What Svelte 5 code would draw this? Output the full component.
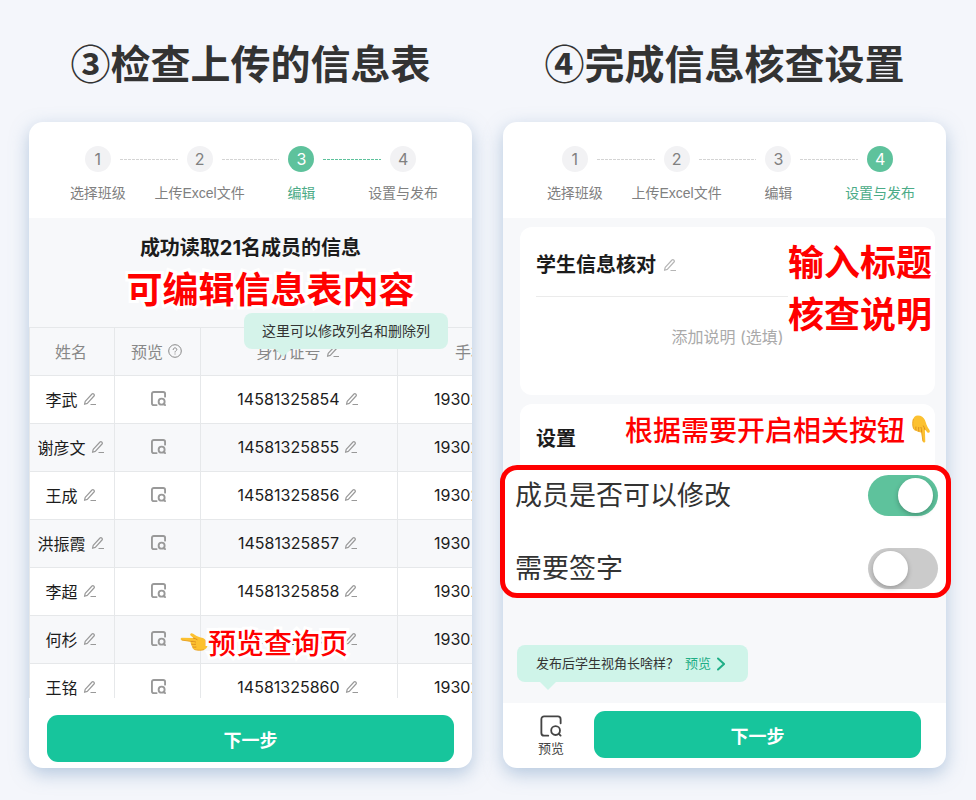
<script>
  const uploadSteps = ['选择班级', '上传Excel文件', '编辑', '设置与发布'];

  const members = [
    { name: '李武', id: '14581325854', phone: '19302' },
    { name: '谢彦文', id: '14581325855', phone: '19302' },
    { name: '王成', id: '14581325856', phone: '19302' },
    { name: '洪振霞', id: '14581325857', phone: '1930' },
    { name: '李超', id: '14581325858', phone: '19302' },
    { name: '何杉', id: '14581325859', phone: '19302' },
    { name: '王铭', id: '14581325860', phone: '19302' }
  ];

  let canEdit = true;
  let needSign = false;
</script>

{#snippet pencil()}
  <svg class="pencil" viewBox="0 0 14 14" fill="none" stroke="currentColor" stroke-width="1.2" aria-hidden="true">
    <path stroke-linejoin="round" d="M1.500 12.300l.7-3L9 2c.5-.5 1.200-.5 1.700 0l.3.3c.5.5.5 1.200 0 1.700L4.300 11.400zM7.500 12.500h5.500" />
  </svg>
{/snippet}

{#snippet previewIcon()}
  <svg class="preview-icon" viewBox="0 0 24 24" fill="none" stroke="currentColor" stroke-linecap="round" aria-hidden="true">
    <path d="M9 22.500H4.500a3 3 0 0 1-3-3v-15a3 3 0 0 1 3-3h15a3 3 0 0 1 3 3V9" />
    <circle cx="17" cy="17" r="4.800" />
    <path d="M20.500 20.500l2 2" />
  </svg>
{/snippet}

{#snippet hand()}
  <svg class="hand" viewBox="0 0 28 20" aria-hidden="true">
    <path fill="#fcc130" d="M1.600 5.700C.3 5.800.3 7.900 1.600 8.100l9.200 1.300c-.6 1-.3 2.100.7 2.700-.5 1.200 0 2.200 1 2.700-.3 1.400.5 2.400 1.800 2.800 2.500.8 6 1 8.700.5 2.700-.5 4.500-2.200 4.500-5 0-3.300-1.800-5.800-4.500-7C19.700 4.900 17 4.200 15 2.900 13.400 1.800 12.300 1 11.300 1.200c-1.300.3-1.500 1.700-.5 2.600l2.700 2.300z" />
    <path fill="none" stroke="#dd901f" stroke-linecap="round" d="M10.900 9.400c1.700-.2 3.300 0 4.700.6M11.500 12.200c1.400.3 2.800.3 4.100.1M12.600 15c1.200.3 2.300.3 3.400.1M13.500 6.100c1.300.2 2.500.8 3.600 1.500" />
    <path fill="none" stroke="#eaa526" stroke-linecap="round" d="M2 8.100l8.500 1.200M14.700 17.600c2.700.8 6.300.9 9 .1" />
  </svg>
{/snippet}

{#snippet stepper(current)}
  <ol class="steps">
    {#each uploadSteps as step, i}
      <li class:active={i + 1 === current}>
        <span class="num">{i + 1}</span>
        <span class="step-label">{step}</span>
      </li>
    {/each}
  </ol>
{/snippet}

<main class="page">
  <section class="column">
    <h1>③检查上传的信息表</h1>
    <div class="phone">
      {@render stepper(3)}
      <div class="content roster">
        <h2>成功读取21名成员的信息</h2>
        <p class="callout edit-callout">可编辑信息表内容</p>
        <div class="table-wrap">
          <table>
            <colgroup>
              <col class="col-name" />
              <col class="col-preview" />
              <col class="col-id" />
              <col />
            </colgroup>
            <thead>
              <tr>
                <th>姓名</th>
                <th>
                  <span class="cell">
                    预览
                    <svg class="help" viewBox="0 0 14 14" fill="none" stroke="currentColor" aria-hidden="true">
                      <circle cx="7" cy="7" r="6.300" />
                      <path stroke-linecap="round" d="M5.200 5.600c0-1 .8-1.700 1.800-1.700s1.800.7 1.800 1.600c0 1.200-1.800 1.300-1.800 2.600M7 9.900v.2" />
                    </svg>
                  </span>
                </th>
                <th><span class="cell">身份证号 {@render pencil()}</span></th>
                <th class="phone-head">手机</th>
              </tr>
            </thead>
            <tbody>
              {#each members as member}
                <tr>
                  <td><span class="cell">{member.name} {@render pencil()}</span></td>
                  <td><button type="button" class="icon-btn" aria-label="预览">{@render previewIcon()}</button></td>
                  <td><span class="cell">{member.id} {@render pencil()}</span></td>
                  <td class="phone-cell">{member.phone}</td>
                </tr>
              {/each}
            </tbody>
          </table>
          <div class="bubble column-tip">这里可以修改列名和删除列</div>
          <p class="callout preview-callout">{@render hand()}预览查询页</p>
        </div>
      </div>
      <footer>
        <button type="button" class="next">下一步</button>
      </footer>
    </div>
  </section>

  <section class="column">
    <h1>④完成信息核查设置</h1>
    <div class="phone settings-phone">
      {@render stepper(4)}
      <div class="content settings">
        <div class="panel form-panel">
          <h2>学生信息核对 {@render pencil()}</h2>
          <textarea aria-label="添加说明" placeholder="添加说明 (选填)"></textarea>
          <p class="callout title-callout">输入标题<br />核查说明</p>
        </div>
        <div class="panel switch-panel">
          <h2>设置</h2>
          <p class="callout switch-callout">根据需要开启相关按钮<span class="hand-down">{@render hand()}</span></p>
        </div>
        <div class="highlight">
          <label>
            成员是否可以修改
            <input type="checkbox" role="switch" bind:checked={canEdit} />
          </label>
          <label>
            需要签字
            <input type="checkbox" role="switch" bind:checked={needSign} />
          </label>
        </div>
        <div class="bubble publish-tip">
          发布后学生视角长啥样？
          <a href="#preview">
            预览
            <svg class="chevron" viewBox="0 0 8 14" fill="none" stroke="currentColor" stroke-width="2" stroke-linecap="round" aria-hidden="true">
              <path d="M1 1.500L7 7l-6 5.500" />
            </svg>
          </a>
        </div>
      </div>
      <footer>
        <button type="button" class="preview-btn">
          {@render previewIcon()}
          预览
        </button>
        <button type="button" class="next">下一步</button>
      </footer>
    </div>
  </section>
</main>

<style>
  :global(body) {
    margin: 0;
    background: #f4f6fb;
  }

  .page {
    --green: #5ec29c;
    --line: #e6e8ea;
    display: grid;
    grid-template-columns: 1fr 1fr;
    gap: 31px;
    box-sizing: border-box;
    height: 100vh;
    min-height: 640px;
    padding: 32px 30px 32px 29px;
    font-family: Inter, 'Noto Sans CJK SC', sans-serif;
    color: #1c1c1c;
  }

  .page * {
    box-sizing: border-box;
  }

  button,
  textarea {
    font-family: inherit;
  }

  .column {
    display: flex;
    flex-direction: column;
    min-width: 0;
    min-height: 0;
  }

  h1,
  h2,
  p {
    margin: 0;
  }

  h1 {
    margin-bottom: 30px;
    font-family: 'Noto Sans CJK SC', sans-serif;
    font-size: 40px;
    line-height: 60px;
    font-weight: 700;
    text-align: center;
    white-space: nowrap;
    color: #333;
  }

  h2 {
    font-size: 20px;
    line-height: 30px;
    font-weight: 700;
  }

  .phone {
    display: flex;
    flex: 1;
    flex-direction: column;
    min-height: 0;
    border-radius: 14px;
    background: #fff;
    box-shadow: 0 6px 18px rgb(120 155 195 / 0.5);
  }

  .steps {
    display: grid;
    grid-template-columns: repeat(4, 1fr);
    margin: 0;
    padding: 24px 18px 14px;
    list-style: none;
    color: #808080;
  }

  .settings-phone .steps {
    padding-right: 15px;
    padding-left: 21px;
  }

  .steps li {
    position: relative;
    display: flex;
    flex-direction: column;
    align-items: center;
    gap: 10px;
  }

  .steps li:not(:last-child)::after {
    content: '';
    position: absolute;
    top: 13px;
    left: calc(50% + 22px);
    width: calc(100% - 44px);
    height: 1px;
    background: repeating-linear-gradient(90deg, #d4d4d4 0 3px, transparent 3px 4px);
  }

  .steps li.active:not(:last-child)::after {
    background: repeating-linear-gradient(90deg, var(--green) 0 3px, transparent 3px 4px);
  }

  .num {
    width: 26px;
    height: 26px;
    border-radius: 50%;
    background: #f2f2f4;
    font-size: 16px;
    line-height: 26px;
    text-align: center;
  }

  .step-label {
    font-family: 'Liberation Sans', 'Noto Sans CJK SC', sans-serif;
    font-size: 14px;
    line-height: 22px;
    white-space: nowrap;
  }

  .active .num {
    background: var(--green);
    color: #fff;
  }

  .active .step-label {
    color: #4bab87;
  }

  .content {
    position: relative;
    flex: 1;
    min-height: 0;
    background: #f7f8fa;
  }

  .roster {
    display: flex;
    flex-direction: column;
    padding-top: 15px;
    overflow: hidden;
  }

  .roster h2 {
    text-align: center;
  }

  .callout {
    color: #f00;
    font-family: 'Noto Sans CJK SC', sans-serif;
    white-space: nowrap;
    paint-order: stroke fill;
    -webkit-text-stroke: 6px #fff;
  }

  .edit-callout {
    margin: 0 0 15px 40px;
    font-size: 36px;
    line-height: 49px;
    font-weight: 700;
    text-align: center;
  }

  .table-wrap {
    position: relative;
  }

  table {
    width: 100%;
    table-layout: fixed;
    border-collapse: collapse;
    font-size: 16px;
  }

  .col-name {
    width: 85px;
  }

  .col-preview {
    width: 86px;
  }

  .col-id {
    width: 197px;
  }

  th,
  td {
    height: 48px;
    padding: 0 2px 2px 0;
    border: 1px solid var(--line);
    text-align: center;
    white-space: nowrap;
    overflow: hidden;
  }

  th {
    font-weight: 400;
    color: #888;
  }

  th:last-child,
  td:last-child {
    border-right: 0;
    text-align: left;
  }

  tbody tr:nth-child(odd) {
    background: #fff;
  }

  .phone-head {
    padding-left: 57px;
  }

  .phone-cell {
    padding-left: 36px;
  }

  .cell {
    display: inline-flex;
    align-items: center;
    gap: 5px;
  }

  .pencil {
    width: 14px;
    height: 14px;
    color: #999;
  }

  .help {
    width: 14px;
    height: 14px;
  }

  .icon-btn {
    display: inline-flex;
    padding: 4px 0 4px 4px;
    border: 0;
    background: none;
    color: #999;
    vertical-align: middle;
  }

  .icon-btn .preview-icon {
    width: 15px;
    height: 15px;
    stroke-width: 3;
  }

  .bubble {
    border-radius: 8px;
    background: #d5f3ea;
    color: #333;
    white-space: nowrap;
  }

  .bubble::after {
    content: '';
    position: absolute;
    top: 100%;
    border: 8px solid transparent;
    border-bottom-width: 0;
    border-top-color: #d5f3ea;
  }

  .column-tip {
    position: absolute;
    top: -14px;
    left: 215px;
    padding: 0 18px;
    font-size: 14px;
    line-height: 36px;
  }

  .column-tip::after {
    left: 31px;
  }

  .preview-callout {
    position: absolute;
    top: 294px;
    left: 151px;
    display: flex;
    align-items: center;
    font-size: 28px;
    line-height: 42px;
    font-weight: 500;
  }

  .hand {
    width: 28px;
    height: 20px;
  }

  footer {
    display: flex;
    padding: 17px 18px 6px;
  }

  .next {
    flex: 1;
    height: 47px;
    border: 0;
    border-radius: 11px;
    background: #17c59c;
    color: #fff;
    font-size: 18px;
    font-weight: 700;
  }

  .settings {
    display: flex;
    flex-direction: column;
    align-items: stretch;
    padding: 9px 11px 0 17px;
  }

  .panel {
    position: relative;
    padding: 0 16px;
    border-radius: 12px;
    background: #fff;
  }

  .form-panel {
    display: flex;
    flex-direction: column;
    height: 168px;
    margin-bottom: 9px;
  }

  .form-panel h2 {
    display: flex;
    align-items: center;
    gap: 7px;
    padding: 23px 0 16px;
    border-bottom: 1px solid #ebebeb;
  }

  .form-panel .pencil {
    color: #b5b5b5;
  }

  textarea {
    flex: 1;
    padding: 28px 0 0;
    border: 0;
    background: none;
    font-size: 16px;
    line-height: 24px;
    text-align: center;
    resize: none;
  }

  textarea::placeholder {
    color: #aaa;
  }

  .title-callout {
    position: absolute;
    top: 7px;
    right: 3px;
    background: #fff;
    font-size: 36px;
    line-height: 52px;
    font-weight: 700;
  }

  .switch-panel {
    height: 70px;
    padding-top: 20px;
  }

  .switch-callout {
    position: absolute;
    top: 4px;
    right: 0;
    display: flex;
    align-items: center;
    gap: 2px;
    font-size: 28px;
    line-height: 42px;
    font-weight: 500;
  }

  .hand-down {
    display: flex;
    transform: rotate(-90deg) scaleY(-1);
  }

  .highlight {
    position: relative;
    display: flex;
    flex-direction: column;
    gap: 32px;
    margin: -9px -16px 0 -20px;
    padding: 5px 8px 4px 10px;
    border: 5px solid #f00;
    border-radius: 17px;
    background: #fff;
  }

  .highlight label {
    display: flex;
    align-items: center;
    justify-content: space-between;
    font-size: 27px;
    line-height: 41px;
    color: #333;
  }

  .highlight input {
    appearance: none;
    display: flex;
    align-items: center;
    width: 70px;
    height: 41px;
    margin: 0;
    padding: 0 5px;
    border-radius: 21px;
    background: #cbcbcb;
  }

  .highlight input::before {
    content: '';
    width: 35px;
    height: 35px;
    border-radius: 50%;
    background: #fff;
    box-shadow: 0 2px 5px rgb(0 0 0 / 0.25);
  }

  .highlight input:checked {
    justify-content: flex-end;
    background: var(--green);
  }

  .publish-tip {
    position: relative;
    display: flex;
    align-items: center;
    align-self: flex-start;
    gap: 6px;
    margin: auto 0 21px -3px;
    padding: 0 23px 0 19px;
    background: #cff4e9;
    font-size: 13px;
    line-height: 37px;
  }

  .publish-tip::after {
    left: 23px;
    border-top-color: #cff4e9;
  }

  .publish-tip a {
    display: flex;
    align-items: center;
    gap: 6px;
    color: #1fae86;
    text-decoration: none;
  }

  .chevron {
    width: 8px;
    height: 14px;
  }

  .settings-phone footer {
    gap: 25px;
    padding: 8px 25px 10px 30px;
  }

  .preview-btn {
    display: flex;
    flex-direction: column;
    align-items: center;
    gap: 1px;
    width: 36px;
    padding: 4px 0 0;
    border: 0;
    background: none;
    font-size: 13px;
    line-height: 20px;
    color: #444;
  }

  .preview-btn .preview-icon {
    width: 22px;
    height: 22px;
    stroke-width: 2;
  }
</style>
